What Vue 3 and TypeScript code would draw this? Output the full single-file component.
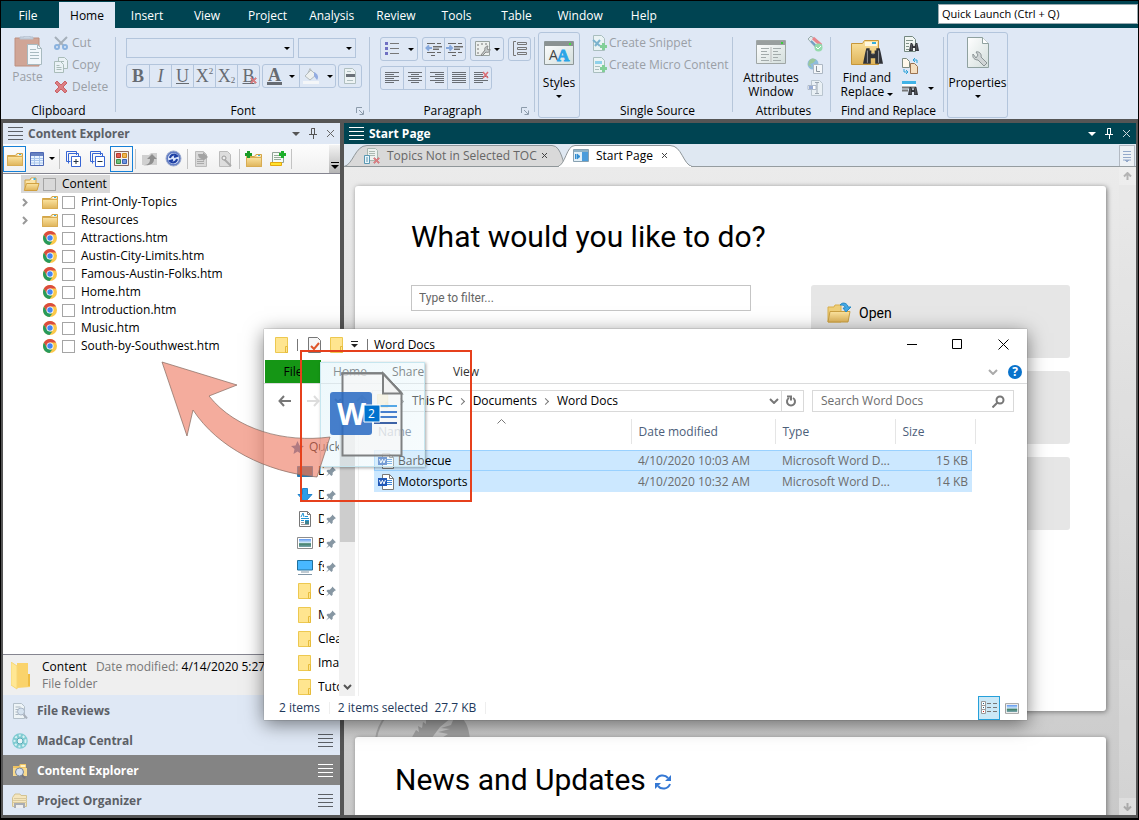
<script setup lang="ts">
import { ref } from 'vue'

interface TreeItem {
  name: string
  folder: boolean
  checked: boolean
}

const menus: string[] = ['File', 'Home', 'Insert', 'View', 'Project', 'Analysis', 'Review', 'Tools', 'Table', 'Window', 'Help']
const activeMenu = ref('Home')
const filter = ref('')
const search = ref('')
const quick = ref('Quick Launch (Ctrl + Q)')

const tree = ref<TreeItem[]>([
  { name: 'Print-Only-Topics', folder: true, checked: false },
  { name: 'Resources', folder: true, checked: false },
  { name: 'Attractions.htm', folder: false, checked: false },
  { name: 'Austin-City-Limits.htm', folder: false, checked: false },
  { name: 'Famous-Austin-Folks.htm', folder: false, checked: false },
  { name: 'Home.htm', folder: false, checked: false },
  { name: 'Introduction.htm', folder: false, checked: false },
  { name: 'Music.htm', folder: false, checked: false },
  { name: 'South-by-Southwest.htm', folder: false, checked: false },
])

const panels = [
  { name: 'File Reviews', icon: 'review', grip: false },
  { name: 'MadCap Central', icon: 'central', grip: true },
  { name: 'Content Explorer', icon: 'explorer', grip: true },
  { name: 'Project Organizer', icon: 'organizer', grip: true },
]
const activePanel = ref('Content Explorer')

const places = [
  { name: 'Desktop', icon: 'desktop', pinned: true },
  { name: 'Downloads', icon: 'download', pinned: true },
  { name: 'Documents', icon: 'docs', pinned: true },
  { name: 'Pictures', icon: 'picture', pinned: true },
  { name: 'fs', icon: 'computer', pinned: true },
  { name: 'Graphics', icon: 'wfolder', pinned: true },
  { name: 'Music', icon: 'wfolder', pinned: true },
  { name: 'Cleanup', icon: 'wfolder', pinned: false },
  { name: 'Images', icon: 'wfolder', pinned: false },
  { name: 'Tutorials', icon: 'wfolder', pinned: false },
]

const files = [
  { name: 'Barbecue', date: '4/10/2020 10:03 AM', type: 'Microsoft Word D...', size: '15 KB' },
  { name: 'Motorsports', date: '4/10/2020 10:32 AM', type: 'Microsoft Word D...', size: '14 KB' },
]

const aligns = ['left', 'center', 'right', 'justify', 'clear']
</script>

<template>
  <div class="app">
    <svg class="defs" aria-hidden="true">
      <defs>
        <linearGradient id="gold" x1="0" y1="0" x2="0" y2="1"><stop offset="0" stop-color="#fbe3a0" /><stop offset="1" stop-color="#dfb45a" /></linearGradient>
        <linearGradient id="sky" x1="0" y1="0" x2="0" y2="1"><stop offset="0" stop-color="#5f97f0" /><stop offset=".45" stop-color="#cfe8f6" /><stop offset=".6" stop-color="#3f7f66" /><stop offset="1" stop-color="#7ba6b0" /></linearGradient>
        <linearGradient id="paper" x1="0" y1="0" x2="1" y2="1"><stop offset="0" stop-color="#ffffff" /><stop offset="1" stop-color="#d3dedc" /></linearGradient>
        <symbol id="folder" viewBox="0 0 16 14"><path d="M.5 3.500h8l1.500-2h5.500v12H.5z" fill="#f3d184" stroke="#d3a546" /><path d="M10.500 2h4v1.500h-4z" fill="#fff" /><path d="M12 2h2v1h-2z" fill="#39b3e6" /><path d="M.5 4.500h15v9H.5z" fill="url(#gold)" stroke="#d8ac53" /></symbol>
        <symbol id="folderopen" viewBox="0 0 16 14"><path d="M1.500 13V3h5l1-2h5v12z" fill="#fbe4a8" stroke="#cfa245" /><path d="M8 1.500h3V3H8z" fill="#fff" /><path d="M10 1h2v2h-2z" fill="#39b3e6" /><path d="M3 6.500h12.500l-2 7H.8z" fill="url(#gold)" stroke="#d0a040" /></symbol>
        <symbol id="chrome" viewBox="0 0 16 16"><circle cx="8" cy="8" r="7" fill="#fbc84a" /><path d="M8 1a7 7 0 0 1 6.100 3.500H8L4.900 9.700 1.900 4.600A7 7 0 0 1 8 1z" fill="#db4c3f" /><path d="M1.900 4.600 5 9.800 8 11.500h2.300L7.600 15A7 7 0 0 1 1.900 4.600z" fill="#279a5b" /><circle cx="8" cy="8" r="3.500" fill="#fff" /><circle cx="8" cy="8" r="2.700" fill="#4285f4" /></symbol>
        <symbol id="wfolder" viewBox="0 0 14 16"><path d="M.5.5h12v15H.5z" fill="#ffe58f" stroke="#edc850" /><path d="M10.500 9.500h2v6h-2z" fill="#ffe58f" stroke="#e6bb3a" /></symbol>
        <symbol id="wordfile" viewBox="0 0 16 16"><path d="M4.500.5h7l4 4v11h-11z" fill="#fff" stroke="#777" /><path d="M11.500.5v4h4" fill="none" stroke="#777" /><path d="M9 6.500h5M9 8.500h5M9 10.500h5" stroke="#3d86d8" /><path d="M0 4h9v8H0z" fill="#2159b8" /><path d="m1.500 6 1.300 4L4.400 6.300 6 10l1.400-4" fill="none" stroke="#fff" /></symbol>
        <symbol id="pin" viewBox="0 0 12 12"><path d="m7.500 0 4.500 4.500-1.500.5-2.500 2.500V10L6.500 11.500 4 9 0 12l3-4L.5 5.500 2 4h2.500L7 1.500z" fill="#8797a3" /></symbol>
        <symbol id="desktop" viewBox="0 0 16 16"><path d="M.5 3.500h15v10H.5z" fill="#53616c" stroke="#2e80b5" /><path d="M1 12h14v2H1z" fill="#2278b5" /></symbol>
        <symbol id="download" viewBox="0 0 16 16"><path d="M5.500 1.500h5v6h4.500L8 15 1 7.500h4.500z" fill="#2d9de8" stroke="#2385cc" /></symbol>
        <symbol id="docs" viewBox="0 0 16 16"><path d="M2.500.5h8l3 3v12h-11z" fill="#fff" stroke="#777" /><path d="M10.500.5v3h3" fill="none" stroke="#777" /><path d="m4 6 2-4 1 4M8 5.500h3M4 7.500h8M4 9.500h3M8 9.500h4" stroke="#1f94d4" fill="none" /><path d="M8 10h4v3H8z" fill="#3d8291" /><path d="M4 11.500h3M4 13.500h8" stroke="#999" /></symbol>
        <symbol id="picture" viewBox="0 0 16 12"><path d="M.5.5h15v11H.5z" fill="#fff" stroke="#8d8d8d" /><path d="M2 2h12v8H2z" fill="url(#sky)" /></symbol>
        <symbol id="computer" viewBox="0 0 16 16"><path d="M.5 1.500h15v9.500H.5z" fill="#48b8ff" stroke="#20709d" /><path d="M4 13h8M1 15.500h14" stroke="#8196a6" /></symbol>
        <symbol id="review" viewBox="0 0 16 16"><path d="M1.500.5h8l3 3v12h-11z" fill="#eef4f7" stroke="#b3bfc9" /><path d="M3.500 4h5M3.500 6.500h3M3.500 9h2M3.500 11.500h3" stroke="#aab6c0" /><circle cx="9" cy="8.500" r="3.500" fill="#d5e2ef" stroke="#a9b5c5" /><path d="m11.500 11.500 3.500 4" stroke="#a9b0bb" stroke-width="2" /></symbol>
        <symbol id="central" viewBox="0 0 16 16"><circle cx="8" cy="8" r="5.500" fill="none" stroke="#7fcbd2" stroke-width="4.500" /><circle cx="8" cy="8" r="5.500" fill="none" stroke="#d8f1f3" stroke-width="2" stroke-dasharray="2 2" /><circle cx="8" cy="8" r="3" fill="#e8f4f8" stroke="#57acb6" /></symbol>
        <symbol id="explorer" viewBox="0 0 16 16"><path d="M1 3h6l1-2h6v11H1z" fill="#edc263" /><path d="M8.500 2h5v2h-5z" fill="#fff1c0" /><path d="M1 5h14v8H1z" fill="#f7d98c" /><circle cx="7.500" cy="9" r="4" fill="#d2def0" stroke="#75849a" /><path d="m10 12 3 3.500" stroke="#74747e" stroke-width="2" /></symbol>
        <symbol id="organizer" viewBox="0 0 16 16"><path d="M.5 4.500 3 1h5l1 1.500h5.500v11H.5z" fill="#f5e6be" stroke="#d2c292" /><path d="M2 5.500h13M1 7.500h14M1 9.500h14" stroke="#d9c99e" /><path d="M3 15v-4h9v4" fill="#eee" stroke="#a9adb4" stroke-width="2" /></symbol>
        <symbol id="delx" viewBox="0 0 14 14"><path d="m1 3 2-2 4 4 4-4 2 2-4 4 4 4-2 2-4-4-4 4-2-2 4-4z" fill="#dc7f83" stroke="#c96267" /></symbol>
        <symbol id="launch" viewBox="0 0 8 8"><path d="M.5 6V.5H6M3 3l4 4M7.500 3.500v4h-4" fill="none" stroke="#8c9bab" /></symbol>
        <symbol id="binos" viewBox="0 0 18 18"><path d="M3 2h3v2h1.500v3h3V4H12V2h3l1 4 2 10h-7v-5H7v5H0L2 6z" fill="#303237" /><path d="M4 4v11M14 4v11M8 7h2" stroke="#8c8c91" /></symbol>
      </defs>
    </svg>

    <nav class="menubar" aria-label="Main menu">
      <button v-for="m in menus" :key="m" class="menu" :class="{ on: m === activeMenu }" @click="activeMenu = m">{{ m }}</button>
      <input v-model="quick" class="quick" aria-label="Quick Launch" />
    </nav>

    <section class="ribbon">
      <div class="group clip">
        <div class="body">
          <button class="paste off">
            <svg width="28" height="32" viewBox="0 0 28 32"><path d="M1 2h24v28H1z" fill="#d0a596" stroke="#bd9080" /><path d="M6 3h13V1h-3V0h-6v1H6z" fill="#cbd5e2" stroke="#b6c1cf" /><path d="M13.500 8.500h10l4 4v16h-14z" fill="#f1f7fb" stroke="#a8bac0" /><path d="M23.500 8.500v4h4M16 13.500h6M16 16.500h9M16 19.500h9M16 22.500h9" fill="none" stroke="#a8bac0" /></svg>
            Paste
          </button>
          <div class="stack">
            <button class="line off"><svg width="14" height="14"><path d="m1 1 9 9M13 1l-9 9" stroke="#a6b0ba" stroke-width="2" /><circle cx="3" cy="11" r="2" fill="none" stroke="#8ab2df" stroke-width="2" /><circle cx="11" cy="11" r="2" fill="none" stroke="#8ab2df" stroke-width="2" /></svg>Cut</button>
            <button class="line off"><svg width="14" height="16"><path d="M4.500.5h6l3 3v8h-9z" fill="#eaf2f6" stroke="#a9bcb9" /><path d="M.5 4.500h6l3 3v8h-9z" fill="#eaf2f6" stroke="#a9bcb9" /><path d="M2.500 8.500h3M2.500 10.500h5M2.500 12.500h5M7 4.500h3" stroke="#a9bcb9" /></svg>Copy</button>
            <button class="line off"><svg width="14" height="14"><use href="#delx" /></svg>Delete</button>
          </div>
        </div>
        <span class="caption">Clipboard</span>
      </div>

      <div class="group font">
        <div class="rows">
          <div class="row">
            <span class="combo wide"><select aria-label="Font family"><option></option></select></span>
            <span class="combo narrow"><select aria-label="Font size"><option></option></select></span>
          </div>
          <div class="row tight">
            <div class="btns serif">
              <button><b>B</b></button><button><i>I</i></button><button><u>U</u></button><button>X<sup>2</sup></button><button>X<sub>2</sub></button>
              <button aria-label="Clear formatting"><u>B</u><svg class="tiny" width="7" height="7"><use href="#delx" /></svg></button>
            </div>
            <div class="btns serif">
              <button class="drop" aria-label="Font colour"><span class="ink">A</span><i class="caret"></i></button>
              <button class="drop" aria-label="Fill"><svg width="17" height="16"><path d="m2 8 6-6 5 5-6 5z" fill="#edf0ef" stroke="#b4bcbe" /><path d="M5 5 7 .5l2 3" fill="none" stroke="#b4bcbe" /><path d="M11 4c4 2 5 5 3 8l-3-4z" fill="#93ace0" /><path d="M0 13h16v3H0z" fill="#f4f6f8" /></svg><i class="caret"></i></button>
            </div>
            <div class="btns">
              <button aria-label="Style format"><svg width="14" height="16"><path d="M1.500.5h8l3 3v12h-11z" fill="#edf3f4" stroke="#b0bfc0" /><path d="M4 3.500h4M4 12.500h6" stroke="#b0bfc0" /><path d="M3 6h9v3H3z" fill="#6a7078" /></svg></button>
            </div>
          </div>
        </div>
        <span class="caption">Font<svg class="launcher" width="8" height="8"><use href="#launch" /></svg></span>
      </div>

      <div class="group para">
        <div class="rows">
          <div class="row">
            <div class="btns"><button class="drop" aria-label="List"><svg width="16" height="16"><path d="M1 1h3v3H1zM1 6h3v3H1zM1 11h3v3H1z" fill="#6f70c2" /><path d="M6 2.500h9M6 7.500h9M6 12.500h9" stroke="#777" /></svg><i class="caret"></i></button></div>
            <div class="btns">
              <button aria-label="Outdent"><svg width="18" height="16"><path d="M2 2.500h8M12 2.500h4M8 5.500h9M8 8.500h6M2 11.500h8M12 11.500h4M6 14.500h4" stroke="#666" /><path d="M8 6h9M8 8h6" stroke="#777" /><path d="M1 7h6M4 4.500 1.500 7 4 9.500" fill="none" stroke="#86a8dc" stroke-width="2" /></svg></button>
              <button aria-label="Indent"><svg width="18" height="16"><path d="M2 2.500h8M12 2.500h4M8 5.500h9M8 8.500h6M2 11.500h8M12 11.500h4M6 14.500h4" stroke="#666" /><path d="M8 6h9M8 8h6" stroke="#777" /><path d="M0 7h6M3.500 4.500 6 7 3.500 9.500" fill="none" stroke="#86a8dc" stroke-width="2" /></svg></button>
            </div>
            <div class="btns"><button class="drop slim" aria-label="Paragraph format"><svg width="16" height="16"><path d="M.5.5h14v14H.5z" fill="#edf0ee" stroke="#98a2a0" /><path d="M3 3v11M6 3h7" stroke="#777" stroke-dasharray="2 2" /><path d="m6 14 4-5c-1-2 1-4 3-4l-1 2 1 2 2-1c0 3-2 4-4 3l-4 4z" fill="#c4caca" stroke="#888" /></svg><i class="caret"></i></button></div>
            <div class="btns"><button aria-label="Blocks"><svg width="16" height="16"><path d="M4 .500H1.500v14H4M5.500 1.500h9v2h-9zM5.500 6.500h9v2h-9zM5.500 11.500h9v2h-9z" fill="none" stroke="#777" /></svg></button></div>
          </div>
          <div class="row">
            <div class="btns">
              <button v-for="a in aligns" :key="a" :aria-label="a"><svg width="16" height="14">
                <path v-if="a === 'left'" d="M1 1.500h14M1 3.500h9M1 5.500h14M1 7.500h9M1 9.500h14M1 11.500h9" stroke="#696e74" />
                <path v-else-if="a === 'center'" d="M1 1.500h14M4 3.500h8M1 5.500h14M4 7.500h8M1 9.500h14M4 11.500h8" stroke="#696e74" />
                <path v-else-if="a === 'right'" d="M1 1.500h14M6 3.500h9M1 5.500h14M6 7.500h9M1 9.500h14M6 11.500h9" stroke="#696e74" />
                <path v-else-if="a === 'justify'" d="M1 1.500h14M1 3.500h14M1 5.500h14M1 7.500h14M1 9.500h14M1 11.500h14" stroke="#696e74" />
                <g v-else><path d="M1 1.500h9M1 3.500h9M1 5.500h14M1 7.500h9M1 9.500h14M1 11.500h9" stroke="#696e74" /><path d="m10 1 5 6m0-6-5 6" stroke="#dc6d74" stroke-width="1.500" /></g>
              </svg></button>
            </div>
          </div>
        </div>
        <span class="caption">Paragraph<svg class="launcher" width="8" height="8"><use href="#launch" /></svg></span>
      </div>

      <button class="big styles">
        <svg width="30" height="24"><path d="M.5.500h29v23H.5z" fill="url(#paper)" stroke="#8d9798" /><path d="M1 1h28v4H1z" fill="#8b9292" /><path d="M25 2h2v2h-2z" fill="#3ee33e" /><text x="5" y="19" font-family="Open Sans" font-size="14" fill="#444">A</text><text x="13" y="20" font-family="Liberation Serif" font-weight="bold" font-size="17" fill="#2aa5e8" stroke="#2aa5e8">A</text></svg>
        Styles<i class="caret"></i>
      </button>

      <div class="group single">
        <div class="stack">
          <button class="line off"><svg width="15" height="16"><path d="M1.500.5h8l3 3v12h-11z" fill="#eaf3f4" stroke="#a9bebe" /><path d="m1 5 7 6m0-6-5 6" stroke="#7bb3ce" stroke-width="2" /><path d="M11.500 8v7M8 11.500h7" stroke="#82cf98" stroke-width="3" /></svg>Create Snippet</button>
          <button class="line off"><svg width="15" height="16"><path d="M1.500.5h8l3 3v12h-11z" fill="#eaf3f4" stroke="#a9bebe" /><path d="M3 4h7v3H3z" fill="#8fd1ea" /><path d="M3 9.500h5M3 12.500h4" stroke="#a9bebe" /><path d="M11.500 8v7M8 11.500h7" stroke="#82cf98" stroke-width="3" /></svg>Create Micro Content</button>
        </div>
        <span class="caption">Single Source</span>
      </div>

      <div class="group attr">
        <div class="body">
          <button class="tall"><svg width="32" height="26"><path d="M1.500 1.500h29v23h-29z" fill="url(#paper)" stroke="#9fa6a5" /><path d="M2 2h28v4H2z" fill="#999f9f" /><path d="M26 3h2v2h-2z" fill="#39ce39" /><path d="M6 9.500h8M6 12.500h6M6 15.500h8M6 18.500h5M6 21.500h8M18 9.500h8M18 12.500h5M18 15.500h8M18 18.500h5M18 21.500h8" stroke="#a3abab" /><path d="M16 8v15" stroke="#bbb" /></svg>Attributes<br />Window</button>
          <div class="icons">
            <button aria-label="Tags"><svg width="16" height="16"><path d="M1 3l3-3 11 9-4 5z" fill="#dfe9ec" stroke="#9aacad" /><path d="m6 2 8 7" stroke="#e8858b" stroke-width="3" /><path d="m4 5 6 6" stroke="#719dc5" stroke-width="2" /><circle cx="11.500" cy="11.500" r="4" fill="#95dbad" /><path d="m9 11 2 2 3-3" fill="none" stroke="#fff" /></svg></button>
            <button aria-label="Language"><svg width="16" height="16"><circle cx="6" cy="6" r="5.500" fill="#8fbcdd" /><path d="M2 3c3-4 6-2 7-1L6 5 3 6l2 4-4-3z" fill="#9bc79c" /><path d="M6.500 6.500h9v9h-9z" fill="#f4f7fa" stroke="#adb8c4" /><path d="M9.500 8v5.500H13" fill="none" stroke="#89929b" /></svg></button>
            <button aria-label="Variables"><svg width="16" height="16"><path d="M4.500.5h8l3 3v12h-11z" fill="#e9f0f5" stroke="#b9c5cf" /><path d="M1 5.500h8v4H1z" fill="#fff" stroke="#afbbca" /><path d="M2 6h4v3H2z" fill="#97acd5" /><path d="M8 2.500h4m-2 0v11m-2 0h4" stroke="#9ca7b2" /></svg></button>
          </div>
        </div>
        <span class="caption">Attributes</span>
      </div>

      <div class="group find">
        <div class="body">
          <button class="tall"><svg width="34" height="28"><path d="M1.500 25.500V4.500h11l2-3h14v24z" fill="url(#gold)" stroke="#c6963a" /><path d="M15 3h12v4H15z" fill="#fff7de" /><path d="M22 3h4v2h-4z" fill="#34b0df" /><g transform="translate(13 7)"><use href="#binos" width="20" height="20" /></g></svg>Find and<br />Replace <i class="caret"></i></button>
          <div class="icons">
            <button aria-label="Find in topic"><svg width="16" height="16"><path d="M1.500.5h8l3 3v12h-11z" fill="#f1f6f3" stroke="#748880" /><path d="M3 4.500h7M3 7.500h3M3 10.500h3M3 13.500h3" stroke="#7f9189" /><use href="#binos" x="6" y="6" width="10" height="10" /></svg></button>
            <button aria-label="Replace"><svg width="17" height="16"><path d="M.5.5h4l3 3v6h-7z" fill="#fff9eb" stroke="#7d8b80" /><path d="M8.500 5.500h4l3 3v7h-7z" fill="#f5dfc0" stroke="#9a7250" /><path d="M15 5V2h-4m2-2-2 2 2 2M2 11v3h4m-2-2 2 2-2 2" fill="none" stroke="#2ba1d8" /></svg></button>
            <button aria-label="Find elements"><svg width="17" height="16"><path d="M0 1h14v3H0z" fill="#41b3e7" /><path d="M0 4h14v3H0z" fill="#fff" /><path d="M0 7.500h14M0 10.500h6" stroke="#777" stroke-width="2" /><use href="#binos" x="6" y="6" width="10" height="10" /></svg></button>
          </div>
          <button class="more" aria-label="More find commands"><i class="caret"></i></button>
        </div>
        <span class="caption">Find and Replace</span>
      </div>

      <button class="big props">
        <svg width="24" height="31"><path d="M1.500.5h15l6 6v24h-21z" fill="url(#paper)" stroke="#8fa19f" /><path d="M16.500.5v6h6" fill="#fff" stroke="#8fa19f" /><path d="M7 17c-1 4 2 6 5 6l6 6 3-3-6-6c1-3-2-6-5-5l2 3-2 3z" fill="#d0d5d6" stroke="#8a9394" /></svg>
        Properties<i class="caret"></i>
      </button>
    </section>

    <main class="work">
      <aside class="left">
        <header class="bar light">
          <i class="grip"></i><h2>Content Explorer</h2>
          <div class="ctl">
            <button aria-label="Options"><svg width="10" height="6"><path d="M1 1h8L5 5z" fill="#555" /></svg></button>
            <button aria-label="Pin"><svg width="9" height="11"><path d="M2.500 6.500v-6h3v6M0 6.500h8M4.500 7v4M5.500 0v6" fill="none" stroke="#555" /></svg></button>
            <button aria-label="Close"><svg width="9" height="9"><path d="m1 1 7 7m0-7L1 8" stroke="#666" /></svg></button>
          </div>
        </header>
        <div class="tools">
          <button class="boxed" aria-label="Show folders"><svg width="16" height="14"><use href="#folder" /></svg></button>
          <button class="lists" aria-label="View style"><svg width="14" height="14"><path d="M.5.5h13v13H.5z" fill="#e8f3ff" stroke="#4d68b4" /><path d="M1 1h12v3H1z" fill="#6681c1" /><path d="M4.500 4v9M9.500 4v9M1 6.500h12M1 8.500h12M1 11h12" stroke="#a9c6ec" /></svg><i class="caret"></i></button>
          <i class="sep"></i>
          <button aria-label="Expand all"><svg width="16" height="16"><path d="M4.500 10.500h-4v-10h10V4M2.500 12.500v-10h10V5" fill="none" stroke="#3665d4" /><path d="M5.500 5.500h9v10h-9z" fill="#fff" stroke="#3665d4" /><path d="M7.500 10.500h5m-2.500-2.500v5" stroke="#234" /></svg></button>
          <button aria-label="Collapse all"><svg width="16" height="16"><path d="M4.500 10.500h-4v-10h10V4M2.500 12.500v-10h10V5" fill="none" stroke="#3665d4" /><path d="M5.500 5.500h9v10h-9z" fill="#fff" stroke="#3665d4" /><path d="M7.500 10.500h5" stroke="#234" /></svg></button>
          <button class="boxed" aria-label="Status colours"><svg width="15" height="15"><path d="M.5.5h14v14H.5z" fill="#f4efec" stroke="#8a6a60" /><path d="M2.500 2.500h4v4h-4z" fill="#e05a50" stroke="#b4392f" /><path d="M8.500 2.500h4v4h-4z" fill="#f3b64e" stroke="#cd8a1e" /><path d="M2.500 8.500h4v4h-4z" fill="#6cc07c" stroke="#3b8f4c" /><path d="M8.500 8.500h4v4h-4z" fill="#6f93de" stroke="#3a62b5" /></svg></button>
          <i class="sep"></i>
          <button aria-label="Up one level"><svg width="17" height="16"><path d="M1 4h7l2-2h6v12H1z" fill="#d0d0d0" /><path d="M2 14c5 0 7-2 7-6H6l5-5 5 5h-3c0 5-4 7-11 6z" fill="#8f8f8f" /></svg></button>
          <button aria-label="Refresh"><svg width="17" height="17"><circle cx="8.500" cy="8.500" r="7.500" fill="#607bc4" stroke="#9baace" /><circle cx="8.500" cy="8.500" r="5.500" fill="#dce6fa" /><path d="M5 8a4 4 0 0 1 7-2l-3 1M12 9a4 4 0 0 1-7 2l3-1" fill="none" stroke="#1d3fa4" stroke-width="2" /></svg></button>
          <i class="sep"></i>
          <button aria-label="Open"><svg width="15" height="16"><path d="M1.500.5h8l3 3v12h-11z" fill="#d9d9d9" stroke="#bbb" /><path d="M3 8.500h7M3 10.500h7M3 12.500h7" stroke="#aaa" /><path d="M4 3h5V1l5 5-5 4V8c-3 0-5-2-5-5z" fill="#a3a3a3" /></svg></button>
          <button aria-label="File properties"><svg width="15" height="16"><path d="M1.500.5h8l3 3v12h-11z" fill="#ddd" stroke="#bbb" /><path d="m5 7 2 2 6 6" fill="none" stroke="#aaa" stroke-width="2" /><circle cx="6" cy="7" r="2" fill="#eee" stroke="#999" /></svg></button>
          <i class="sep"></i>
          <button aria-label="New folder"><svg width="17" height="16"><use href="#folder" x="1" y="2" width="16" height="14" /><path d="M3.500 0v7M0 3.500h7" stroke="#1a9b27" stroke-width="3" /></svg></button>
          <button aria-label="New topic"><svg width="16" height="16"><path d="M2.500 1.500h8l3 3v7h-11z" fill="#f5fbf5" stroke="#90a397" /><path d="M4 4.500h5M4 6.500h7M4 8.500h7" stroke="#97aa9b" /><path d="M.5 11.500h11v3H.5z" fill="#ffe32d" stroke="#e5a710" /><path d="M12.500 0v7M9 3.500h7" stroke="#1eaf2a" stroke-width="3" /></svg></button>
          <i class="sep"></i>
          <button class="over" aria-label="Toolbar options"><svg width="8" height="9"><path d="M0 1.500h8" stroke="#000" /><path d="M0 4h8L4 8z" /></svg></button>
        </div>
        <div class="tree">
          <div class="node root"><svg width="17" height="14"><use href="#folderopen" /></svg><label><input type="checkbox" />Content</label></div>
          <div v-for="t in tree" :key="t.name" class="node">
            <span class="twist"><svg v-if="t.folder" width="6" height="9"><path d="m1 1 3.500 3.500L1 8" fill="none" stroke="#999" stroke-width="2" /></svg></span>
            <svg width="16" height="16"><use :href="t.folder ? '#folder' : '#chrome'" /></svg>
            <label><input v-model="t.checked" type="checkbox" />{{ t.name }}</label>
          </div>
        </div>
        <div class="info">
          <svg width="20" height="28"><path d="M6 1h11v19h2v5l-13 1z" fill="#fad36c" /><path d="m0 0 6 4v23l-6-4z" fill="#ffe794" stroke="#f6d776" /><path d="M17 12h2v12h-2z" fill="#efbd45" /></svg>
          <div>
            <p>Content <span class="lbl">Date modified:</span> 4/14/2020 5:27 PM</p>
            <p class="mute">File folder</p>
          </div>
        </div>
        <button v-for="p in panels" :key="p.name" class="panel" :class="{ on: p.name === activePanel }" @click="activePanel = p.name">
          <svg width="16" height="16"><use :href="'#' + p.icon" /></svg><span>{{ p.name }}</span><i v-if="p.grip" class="grip"></i>
        </button>
      </aside>

      <section class="right">
        <header class="bar dark">
          <i class="grip"></i><h2>Start Page</h2>
          <div class="ctl">
            <button aria-label="Options"><svg width="10" height="6"><path d="M1 1h8L5 5z" fill="#fff" /></svg></button>
            <button aria-label="Pin"><svg width="9" height="11"><path d="M2.500 6.500v-6h3v6M0 6.500h8M4.500 7v4M5.500 0v6" fill="none" stroke="#fff" /></svg></button>
            <button aria-label="Close"><svg width="9" height="9"><path d="m1 1 7 7m0-7L1 8" stroke="#ccdadd" /></svg></button>
          </div>
        </header>
        <div class="tabs">
          <div class="tab back">
            <svg class="shape" viewBox="0 0 222 23" preserveAspectRatio="none"><path d="M0 22.500C9 21 11 1.500 23 1.500h185c10 0 11 21 14 21z" fill="#d9d9d9" stroke="#8f9699" /></svg>
            <button class="name"><svg width="16" height="16"><path d="M3.500.5h8l2 2v10h-10z" fill="#edf1ef" stroke="#a8b8b0" /><path d="M5 3.500h6M5 5.500h6M5 7.500h6" stroke="#aab8b1" /><path d="M.5 7.500h5v8h-5z" fill="#eaf6fc" stroke="#5998b3" /><path d="M3 9v5" stroke="#5998b3" /><use href="#delx" x="9" y="9" width="7" height="7" /></svg>Topics Not in Selected TOC</button>
            <button class="x" aria-label="Close tab"><svg width="7" height="7"><path d="m1 1 5 5m0-5L1 6" stroke="#444" /></svg></button>
          </div>
          <div class="tab front">
            <svg class="shape" viewBox="0 0 136 23" preserveAspectRatio="none"><path d="M0 23C9 21 9 1.500 18 1.500h95c12 0 13 19 22 21V23z" fill="#fff" stroke="#8f9699" /><path d="M2 22.500h132" stroke="#fff" /></svg>
            <button class="name"><svg width="16" height="13"><path d="M.5.5h15v12H.5z" fill="#e2f0f8" stroke="#88a1b1" /><path d="M1 1h14v2H1z" fill="#8eb3c8" /><path d="M9 3h6v9H9z" fill="#4b9cdb" /><path d="M2.500 5v5M4 5l3 2.500L4 10z" fill="#318dd1" stroke="#318dd1" /></svg>Start Page</button>
            <button class="x" aria-label="Close tab"><svg width="7" height="7"><path d="m1 1 5 5m0-5L1 6" stroke="#444" /></svg></button>
          </div>
          <button class="tablist" aria-label="Tab list"><svg width="9" height="13"><path d="M0 1.500h8M0 4.500h8M0 7.500h8M0 10h8M2 10l2 2 2-2" fill="#94a9ca" stroke="#94a9ca" /></svg></button>
        </div>
        <div class="canvas">
          <svg class="mark" width="120" height="60"><path d="M2 46C3 38 5 32 12 23" fill="none" stroke="#a9a9a9" stroke-width="2" /><path d="M52 25h25L66 34 57 46H37l5-9 3 2-1-6 4 2 1-6 3 2z" fill="#a4a4a4" /><path d="M80 25h8c5 5 7 12 8 21H66l8-5-10-2 12-3-9-1 10-3z" fill="#a4a4a4" /></svg>
          <div class="page">
            <article class="card">
              <h1>What would you like to do?</h1>
              <div class="cols">
                <input v-model="filter" class="filter" placeholder="Type to filter..." aria-label="Type to filter" />
                <div class="tiles">
                  <button class="tile"><svg width="26" height="22"><path d="M1 20V5h6l1-2h6v17z" fill="#efcf7a" stroke="#d9af4a" /><path d="M3 9.500h20l-2 10.500H1z" fill="url(#gold)" stroke="#c99f42" /><path d="M13 3c3-4 8-1 8 2h3l-5 5-3-4h2c0-3-3-3-5-3z" fill="#43a8e6" stroke="#278ac5" /></svg>Open</button>
                  <div class="tile"></div>
                  <div class="tile"></div>
                </div>
              </div>
            </article>
            <article class="card news">
              <h1>News and Updates</h1>
              <button aria-label="Refresh news"><svg width="18" height="18" viewBox="0 0 18 18"><path d="M2 7a7 7 0 0 1 12-2M16 11a7 7 0 0 1-12 2" fill="none" stroke="#3478d4" stroke-width="2" /><path d="M17 2v6h-6zM1 16v-6h6z" fill="#3478d4" /></svg></button>
            </article>
          </div>
          <div class="scroll"><svg width="9" height="8"><path d="M4.500 8V1M1 4.500 4.500 1 8 4.500" fill="none" stroke="#b4b4b4" stroke-width="2" /></svg><i></i><span class="down"><svg width="9" height="8"><path d="M4.500 0v7M1 3.500 4.500 7 8 3.500" fill="none" stroke="#aaa" stroke-width="2" /></svg></span></div>
        </div>
      </section>
    </main>

    <section class="win" aria-label="Word Docs">
      <header class="title">
        <svg width="14" height="16"><use href="#wfolder" /></svg><i class="vbar"></i>
        <svg class="doc" width="13" height="16"><path d="M.5.5h9l3 3v12H.5z" fill="#f7f7f7" stroke="#777" /><path d="m3 9 3 3 5-6" fill="none" stroke="#df562a" stroke-width="2" /></svg>
        <svg width="14" height="16"><use href="#wfolder" /></svg>
        <svg class="cust" width="7" height="7"><path d="M0 .5h7" stroke="#222" /><path d="M0 3h7L3.500 6.500z" fill="#222" /></svg>
        <i class="vbar"></i><span>Word Docs</span>
        <div class="wctl">
          <button aria-label="Minimize"><svg width="11" height="11"><path d="M0 5.500h10" stroke="#000" /></svg></button>
          <button aria-label="Maximize"><svg width="11" height="11"><path d="M.5.5h9v9h-9z" fill="none" stroke="#000" /></svg></button>
          <button aria-label="Close"><svg width="11" height="11"><path d="m.5.5 10 10m0-10-10 10" stroke="#000" /></svg></button>
        </div>
      </header>
      <div class="wtabs">
        <button class="file">File</button><button>Home</button><button>Share</button><button>View</button>
        <span class="help"><svg width="10" height="6"><path d="m1 1 4 4 4-4" fill="none" stroke="#aaa" stroke-width="2" /></svg><b>?</b></span>
      </div>
      <div class="addr">
        <div class="arrows">
          <svg width="14" height="12"><path d="M13 6H2M6 1 1.500 6 6 11" fill="none" stroke="#777" stroke-width="2" /></svg>
          <svg width="14" height="12"><path d="M1 6h11M8 1l4.500 5L8 11" fill="none" stroke="#ddd" stroke-width="2" /></svg>
          <svg width="8" height="6"><path d="m1 1 3 3 3-3" fill="none" stroke="#666" stroke-width="2" /></svg>
          <svg width="12" height="14"><path d="M6 13V2M1 7l5-5 5 5" fill="none" stroke="#555" stroke-width="2" /></svg>
        </div>
        <div class="path">
          <svg width="12" height="14"><use href="#wfolder" /></svg>
          <i class="chev"></i><a href="#pc">This PC</a><i class="chev"></i><a href="#docs">Documents</a><i class="chev"></i><a href="#word">Word Docs</a>
          <svg class="end" width="10" height="6"><path d="m1 1 4 4 4-4" fill="none" stroke="#777" stroke-width="2" /></svg>
          <button aria-label="Reload"><svg width="12" height="13"><path d="M8 3a4 4 0 1 1-4 0" fill="none" stroke="#777" stroke-width="2" /><path d="M2 1.500h4v4" fill="none" stroke="#777" stroke-width="2" /></svg></button>
        </div>
        <div class="find-box"><input v-model="search" placeholder="Search Word Docs" aria-label="Search Word Docs" /><svg width="13" height="13"><circle cx="8" cy="5" r="3.500" fill="none" stroke="#777" stroke-width="2" /><path d="m5.500 7.500-5 5" stroke="#777" stroke-width="2" /></svg></div>
      </div>
      <div class="mid">
        <nav class="places" aria-label="Places">
          <div class="list">
            <a href="#quick" class="place quick-a"><svg width="13" height="13"><path d="m6.500 0 2 4.500 4.500.5-3.500 3 1 5-4-2.500L2.500 13l1-5L0 5l4.500-.5z" fill="#3d6fb0" /></svg><span>Quick access</span></a>
            <a v-for="p in places" :key="p.name" href="#place" class="place"><svg width="16" height="16"><use :href="'#' + p.icon" /></svg><span>{{ p.name }}</span><svg v-if="p.pinned" class="pin" width="10" height="11"><use href="#pin" /></svg></a>
          </div>
          <div class="vscroll"><svg width="9" height="6"><path d="m1 5 3.500-3.500L8 5" fill="none" stroke="#555" stroke-width="2" /></svg><i></i><svg width="9" height="6"><path d="m1 1 3.500 3.500L8 1" fill="none" stroke="#555" stroke-width="2" /></svg></div>
        </nav>
        <div class="files">
          <svg class="sort" width="9" height="5"><path d="m.5 4.500 4-4 4 4" fill="none" stroke="#777" /></svg>
          <table>
            <colgroup><col class="c1" /><col class="c2" /><col class="c3" /><col class="c4" /></colgroup>
            <thead><tr><th>Name</th><th>Date modified</th><th>Type</th><th>Size</th></tr></thead>
            <tbody>
              <tr v-for="f in files" :key="f.name"><td class="fname"><svg width="16" height="16"><use href="#wordfile" /></svg>{{ f.name }}</td><td>{{ f.date }}</td><td>{{ f.type }}</td><td class="size">{{ f.size }}</td></tr>
            </tbody>
          </table>
        </div>
      </div>
      <footer class="status">
        <span>2 items</span><span>2 items selected&nbsp; 27.7 KB</span>
        <div class="views">
          <button class="on" aria-label="Details view"><svg width="17" height="14"><path d="M.5.5h4v4h-4zM.5 4.500h4v4h-4zM.5 8.500h4v4h-4z" fill="#fff" stroke="#999" /><path d="M6 2.500h4M12 2.500h4M6 6.500h4M12 6.500h4M6 10.500h4M12 10.500h4" stroke="#777" /><path d="M2 10h1v1H2z" fill="#c22" /><path d="M2 2h1v1H2zM2 6h1v1H2z" fill="#268" /></svg></button>
          <button aria-label="Thumbnail view"><svg width="14" height="11"><use href="#picture" /></svg></button>
        </div>
      </footer>
    </section>

    <div class="ghost">
      <svg width="104" height="104"><path d="M21.500 13V10.500H63l19 20" fill="none" stroke="#8b9093" /><path d="M22.500 11.500H63l18.500 20v62h-59z" fill="#f7f7f7" fill-opacity=".7" stroke="#7e8081" stroke-width="2" /><path d="M63 11.500v20h18.500z" fill="#f2f3f3" stroke="#7e8081" stroke-width="2" /><path d="M54 44h23" stroke="#55a7e6" stroke-width="2" /><path d="M54 50h23M54 55h23" stroke="#477fce" stroke-width="2" /><path d="M54 61h23" stroke="#3c62a6" stroke-width="2" /><rect x="10" y="30" width="42" height="43" rx="3" fill="#2768c2" fill-opacity=".85" /><text x="17" y="63" font-family="Open Sans" font-weight="bold" font-size="30" fill="#fff">W</text><path d="M44 43h16v17H44z" fill="#0072ce" stroke="#fff" /><text x="48" y="56" font-family="Open Sans" font-size="12" fill="#fff">2</text></svg>
    </div>
    <svg class="arrow" width="172" height="120"><path d="M2 2 77 25 49 36C76 70 125 83 170 77L157 117C106 112 58 88 33 50L27 76Z" fill="#ee8069" fill-opacity=".65" stroke="#83695f" stroke-opacity=".7" /></svg>
    <div class="callout"></div>
  </div>
</template>

<style>
html, body { margin: 0; height: 100%; overflow: hidden; }
</style>

<style scoped>
* { box-sizing: border-box; }
.app { position: relative; height: 100vh; display: flex; flex-direction: column; border: 1px solid #000; border-bottom-width: 2px; background: #555; font-family: "Open Sans", "Noto Sans", sans-serif; font-size: 12px; line-height: 16px; color: #000; overflow: hidden; }
.defs { position: absolute; width: 0; height: 0; }
button { font: inherit; color: inherit; background: none; border: 0; padding: 0; margin: 0; display: flex; align-items: center; justify-content: center; }
svg { flex: none; }
h1, h2, p { margin: 0; font-weight: normal; }
a { color: inherit; text-decoration: none; }
.caret { display: inline-block; flex: none; width: 0; height: 0; border: 3px solid transparent; border-top: 3px solid #000; border-bottom: 0; }

.menubar { display: flex; flex: none; gap: 4px; height: 27px; padding-top: 1px; background: #004452; color: #fff; }
.menu { min-width: 56px; padding: 2px 9px 0; }
.menu:first-child { min-width: 54px; }
.menu.on { background: #dfe8f5; color: #000; }
.quick { width: 200px; height: 20px; margin: 2px 0 0 auto; padding: 0 3px 2px; border: 1px solid #9aaab0; background: #fff; font: 11px "Open Sans", sans-serif; color: #000; }

.ribbon { display: flex; flex: none; height: 91px; background: #dfe8f5; }
.group { position: relative; display: flex; flex-direction: column; justify-content: space-between; flex: none; padding: 8px 0 0; }
.group::after { content: ""; position: absolute; right: 0; top: 9px; height: 75px; width: 1px; background: #b6c6da; }
.caption { display: block; text-align: center; height: 16px; position: relative; }
.launcher { position: absolute; right: 6px; top: 4px; }
.body { display: flex; }
.off { color: #9a9fa6; }
.clip { width: 115px; }
.paste { flex-direction: column; width: 53px; gap: 1px; justify-content: flex-start; }
.stack { display: flex; flex-direction: column; margin-top: -4px; }
.line { height: 22px; gap: 4px; justify-content: flex-start; }
.rows { display: flex; flex-direction: column; gap: 5px; padding-left: 10px; padding-top: 1px; }
.row { display: flex; gap: 4px; }
.row.tight { gap: 2px; }
.font { width: 254px; }
.font .rows { gap: 6px; padding-top: 2px; }
.combo { position: relative; display: block; height: 20px; }
.combo.wide { width: 168px; }
.combo.narrow { width: 58px; }
.combo select { appearance: none; width: 100%; height: 100%; border: 1px solid #b3c5dc; background: #dfe8f5; border-radius: 0; }
.combo::after { content: ""; position: absolute; right: 4px; top: 9px; border: 3px solid transparent; border-top-color: #000; border-bottom: 0; pointer-events: none; }
.btns { display: flex; height: 24px; border: 1px solid #b3c5dc; border-radius: 3px; }
.btns button { width: 22px; position: relative; }
.btns button + button { border-left: 1px solid #b3c5dc; }
.btns .drop { width: 36px; gap: 7px; }
.para .btns button { width: 21px; }
.para .row + .row .btns button { width: 22px; }
.para .btns .drop { width: 36px; gap: 8px; }
.para .btns .slim { width: 32px; gap: 3px; }
.serif button { font: 18px/20px "Liberation Serif", serif; color: #666b72; }
.serif sup, .serif sub { font-size: 9px; line-height: 9px; }
.serif sup { align-self: flex-start; margin-top: 2px; }
.serif sub { align-self: flex-end; margin-bottom: 2px; }
.tiny { position: absolute; right: 2px; bottom: 3px; }
.ink { font-weight: bold; line-height: 14px; border-bottom: 3px solid #666b72; padding: 0 1px; height: 17px; }
.para { width: 165px; }
.big { flex-direction: column; flex: none; justify-content: flex-start; border: 1px solid #b3c5dc; border-radius: 3px; margin: 4px 0 1px 3px; }
.styles { width: 42px; padding-top: 8px; }
.styles svg { margin-bottom: 10px; }
.big .caret { margin-top: 4px; }
.single { width: 153px; padding-left: 12px; }
.single .line { gap: 2px; white-space: nowrap; }
.single .caption { margin-left: -12px; padding-left: 2px; }
.attr { width: 98px; }
.attr .caption { padding-left: 3px; }
.attr .body, .find .body { height: 66px; }
.tall { display: block; width: 74px; line-height: 14px; text-align: center; padding-left: 2px; }
.tall svg { display: block; margin: 0 auto 6px; }
.icons { display: flex; flex-direction: column; gap: 6px; }
.icons button { height: 16px; }
.find { width: 113px; }
.find .tall { width: 70px; padding-left: 0; margin-left: 1px; }
.find .tall svg { margin-bottom: 4px; }
.find .caption { white-space: nowrap; padding-left: 2px; }
.more { align-self: flex-end; margin: 0 0 12px 9px; }
.props { width: 61px; padding-top: 4px; }
.props svg { margin-bottom: 7px; }

.work { display: flex; flex: 1; min-height: 0; padding: 4px 2px 3px; gap: 4px; }
.left { display: flex; flex-direction: column; width: 337px; flex: none; background: #dfe8f5; }
.bar { display: flex; align-items: center; height: 21px; flex: none; padding: 0 5px; gap: 5px; }
.bar h2 { font-size: 12px; font-weight: bold; }
.grip { width: 15px; height: 13px; flex: none; background: repeating-linear-gradient(to bottom, currentColor 0 1px, transparent 1px 4px); }
.bar.light { color: #5c6066; background: #dfe8f5; }
.bar.dark { color: #fff; background: #004452; }
.ctl { display: flex; margin-left: auto; gap: 8px; }
.tools { display: flex; align-items: center; flex: none; height: 29px; background: linear-gradient(#fdfdfd, #f0f0f0); gap: 1px; }
.tools button { width: 23px; height: 26px; flex: none; }
.tools .boxed { border: 1px solid #1580d8; }
.tools .lists { width: 30px; gap: 5px; }
.tools .over { width: 11px; height: 28px; margin-left: auto; align-items: flex-end; padding-bottom: 3px; background: linear-gradient(#f3f3f3, #b5b5b5); }
.sep { width: 1px; height: 20px; margin: 0 1px; background: #c3c3c3; }
.tree { flex: 1; border-top: 1px solid #858590; border-bottom: 1px solid #858590; background: #fff; padding-top: 1px; }
.node { display: flex; align-items: center; height: 18px; padding-left: 18px; gap: 4px; }
.node.root { width: 89px; margin-left: 18px; padding-left: 2px; background: #d9d9d9; gap: 3px; }
.twist { width: 17px; height: 8px; padding-left: 1px; display: flex; align-items: center; }
.node label { display: flex; align-items: center; gap: 6px; }
.node input { appearance: none; width: 13px; height: 13px; margin: 0; border: 1px solid #a5a5a5; }
.info { display: flex; flex: none; gap: 11px; height: 40px; padding: 3px 8px 0; background: #efefef; white-space: nowrap; overflow: hidden; line-height: 17px; }
.info svg { margin-top: 4px; }
.lbl { color: #777; margin: 0 0 0 6px; }
.mute { color: #777; }
.panel { height: 30px; flex: none; justify-content: flex-start; gap: 9px; padding: 1px 7px 0 9px; font-weight: bold; color: #5c6066; }
.panel .grip { margin-left: auto; }
.panel.on { background: #848484; color: #fff; }

.right { flex: 1; min-width: 0; display: flex; flex-direction: column; }
.tabs { display: flex; flex: none; height: 23px; background: #dfe8f2; border-bottom: 1px solid #959ca0; }
.tab { position: relative; display: flex; align-items: center; height: 23px; }
.shape { position: absolute; inset: 0; width: 100%; height: 100%; }
.tab button { position: relative; }
.tab .name { gap: 7px; white-space: nowrap; }
.back { width: 222px; padding-left: 20px; gap: 4px; color: #666; }
.front { width: 136px; margin-left: -9px; padding-left: 16px; gap: 8px; }
.tablist { width: 16px; margin: 1px 1px 0 auto; border: 1px solid #b3bac3; border-bottom: 0; background: #edf1f5; }
.canvas { position: relative; display: flex; flex: 1; min-height: 0; background: linear-gradient(#ebebeb, #c9c9c9); }
.mark { position: absolute; left: 30px; top: 526px; }
.page { position: relative; flex: 1; min-width: 0; padding: 19px 13px 0 11px; overflow: hidden; display: flex; flex-direction: column; gap: 26px; }
.card { flex: none; min-height: 525px; background: #fff; border-radius: 3px; box-shadow: 1px 1px 5px #777; padding: 33px 36px 36px 56px; }
.card h1 { font: 30px/36px Roboto, sans-serif; }
.cols { display: flex; gap: 60px; margin-top: 30px; }
.filter { flex: 1; min-width: 0; height: 26px; border: 1px solid #c5c5c5; padding: 0 7px; font: 12px Roboto, sans-serif; }
.filter::placeholder { color: #666; }
.tiles { display: flex; flex-direction: column; gap: 13px; width: 259px; }
.tile { width: 100%; height: 73px; background: #e6e6e6; border-radius: 3px; padding: 0 16px 18px; justify-content: flex-start; gap: 6px; font: 14px Roboto, sans-serif; }
.news { display: flex; align-items: flex-start; gap: 8px; padding: 25px 40px; }
.news button { margin-top: 11px; }
.scroll { width: 17px; flex: none; background: rgba(255, 255, 255, .18); display: flex; flex-direction: column; align-items: center; padding-top: 5px; }
.scroll i { width: 17px; margin-top: 5px; height: 475px; background: rgba(0, 0, 0, .02); }
.scroll .down { display: flex; align-items: center; justify-content: center; width: 17px; height: 17px; margin-top: auto; background: rgba(255, 255, 255, .25); }

.win { position: absolute; left: 263px; top: 328px; width: 763px; height: 391px; display: flex; flex-direction: column; background: #fff; box-shadow: 0 4px 18px rgba(0, 0, 0, .5), 0 0 1px #777; }
.title { display: flex; flex: none; align-items: center; height: 31px; padding-left: 11px; }
.vbar { width: 1px; height: 12px; background: #777; margin: 0 10px 0 8px; }
.doc { margin-right: 9px; }
.cust { margin-left: 7px; }
.cust + .vbar { margin: 0 6px 0 9px; }
.wctl { display: flex; margin-left: auto; }
.wctl button { width: 45px; height: 30px; }
.wctl button:last-child { width: 47px; }
.wtabs { display: flex; flex: none; height: 24px; padding-left: 1px; border-bottom: 1px solid #dadbdc; color: #333; }
.wtabs button { width: 58px; }
.wtabs .file { width: 56px; background: #159615; color: #000; }
.help { display: flex; align-items: center; gap: 10px; margin-left: auto; padding-right: 5px; }
.help b { width: 14px; height: 14px; border-radius: 50%; background: #0972cb; color: #fff; text-align: center; line-height: 14px; }
.addr { display: flex; flex: none; height: 29px; padding: 6px 13px 1px 14px; }
.arrows { display: flex; align-items: center; width: 94px; gap: 14px; flex: none; }
.path { display: flex; align-items: center; flex: 1; min-width: 0; border: 1px solid #d9d9d9; padding-left: 4px; }
.path svg:first-child { margin-right: 3px; }
.chev { width: 5px; height: 5px; border: solid #777; border-width: 1px 1px 0 0; transform: rotate(45deg); margin: 0 9px 0 6px; flex: none; }
.end { margin-left: auto; margin-right: 2px; }
.path button { width: 22px; height: 20px; border-left: 1px solid #d9d9d9; }
.find-box { display: flex; align-items: center; width: 202px; margin-left: 8px; border: 1px solid #d9d9d9; padding: 0 8px; }
.find-box input { flex: 1; min-width: 0; border: 0; padding: 0; font: inherit; outline: 0; }
.find-box input::placeholder { color: #6d6d6d; }
.mid { display: flex; flex: 1; min-height: 0; }
.places { display: flex; width: 95px; flex: none; border-right: 1px solid #f0f0f0; padding-right: 3px; }
.list { flex: 1; min-width: 0; padding-top: 22px; overflow: hidden; }
.place { display: flex; align-items: center; height: 24px; padding-left: 33px; gap: 5px; overflow: hidden; white-space: nowrap; }
.quick-a { padding-left: 27px; }
.place span { overflow: hidden; flex: 1; min-width: 0; }
.place .pin { margin: 0 3px 0 -3px; }
.vscroll { display: flex; flex-direction: column; align-items: center; justify-content: space-between; flex: none; width: 16px; background: #f0f0f0; padding: 6px 0; }
.vscroll i { width: 15px; height: 112px; background: #cdcdcd; margin: 5px 0 auto; }
.files { position: relative; flex: 1; min-width: 0; padding: 6px 55px 0 15px; }
.sort { position: absolute; left: 138px; top: 6px; }
table { width: 100%; border-collapse: collapse; table-layout: fixed; }
.c1 { width: 257px; } .c2 { width: 144px; } .c3 { width: 120px; } .c4 { width: 77px; }
th { height: 25px; padding: 0 6px 0 7px; text-align: left; font-weight: normal; color: #4c607a; border-right: 1px solid #e5e5e5; }
th:first-child { padding-left: 4px; }
th:last-child { border-right: 0; box-shadow: 3px 0 0 #fff, 4px 0 0 #e5e5e5; }
thead::after { content: ""; display: block; height: 6px; }
tbody tr { height: 21px; background: #cce8ff; color: #6d6d6d; }
tbody tr:first-child { outline: 1px solid #99d1ff; outline-offset: -1px; }
td { padding: 0 4px 0 7px; height: 21px; white-space: nowrap; overflow: hidden; }
.fname { display: flex; align-items: center; gap: 4px; padding-left: 4px; color: #000; }
.size { text-align: right; }
.status { display: flex; align-items: center; flex: none; height: 24px; padding-left: 15px; color: #1e395b; }
.status span { padding-right: 9px; margin-right: 8px; border-right: 1px solid #eee; height: 12px; line-height: 11px; }
.views { display: flex; margin-left: auto; padding-right: 4px; align-self: stretch; }
.views button { width: 23px; height: 24px; }
.views .on { width: 22px; border: 1px solid #26a0da; background: #cbe8f6; }

.ghost { position: absolute; left: 319px; top: 361px; width: 105px; height: 105px; background: linear-gradient(120deg, rgba(220, 241, 248, .5), rgba(235, 247, 251, .4)); box-shadow: 1px 1px 3px rgba(0, 0, 0, .35), inset 0 0 0 1px #c6e6ef; }
.arrow { position: absolute; left: 159px; top: 359px; }
.callout { position: absolute; left: 299px; top: 349px; width: 172px; height: 152px; border: 2px solid #e6401c; }
</style>
